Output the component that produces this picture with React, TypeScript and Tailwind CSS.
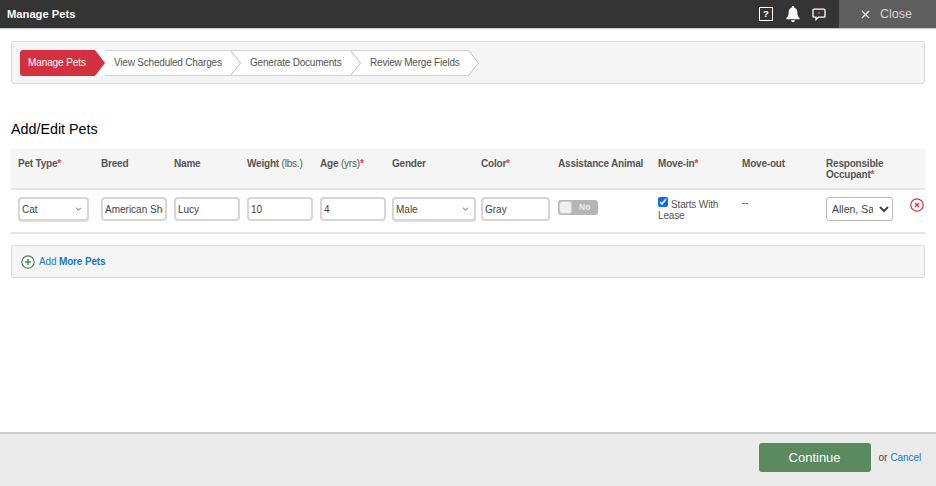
import { X } from "lucide-react";

const steps = ["View Scheduled Charges", "Generate Documents", "Review Merge Fields"];
const inputClass =
  "h-6 rounded-[4px] border-2 border-[#d6d6d6] bg-white px-[2px] text-[10px] text-[#444] outline-none";

const Req = () => <span className="text-[#e0404e]">*</span>;

const PlainSelect = ({ label, width }: { label: string; width: string }) => (
  <div className={`relative ${width}`}>
    <div className={`${inputClass} flex items-center shadow-[0_1px_1px_#ddd]`}>{label}</div>
    <svg viewBox="0 0 8 5" className="absolute right-[7px] top-[10px] h-[4px] w-[7px]" fill="none" stroke="#555" strokeWidth="1.2">
      <path d="M1 1l3 3 3-3" />
    </svg>
  </div>
);

const Chevron = ({ last }: { last: boolean }) => (
  <svg viewBox="0 0 11 26" className={`h-[26px] w-[11px] shrink-0 ${last ? "" : "bg-white"}`}>
    <path d="M0 .5h.5L10.5 13 .5 25.500H0" fill="#ffffff" stroke="#bdbdbd" />
    {!last && <path d="M0 .5h11M0 25.500h11" fill="none" stroke="#d5d5d5" />}
  </svg>
);

const Stepper = () => (
  <div className="mx-[11px] mt-[13px] flex h-[43px] items-center rounded-[3px] border border-[#d9d9d9] bg-[#f5f5f5] px-2">
    <div className="flex h-[26px] items-center rounded-l-[3px] bg-[#d3313f] pl-2 text-[10px] tracking-[-0.1px] text-white">
      <span className="w-[67px]">Manage Pets</span>
    </div>
    <svg viewBox="0 0 10 26" className="h-[26px] w-[10px] shrink-0 bg-white">
      <path d="M0 0l10 13L0 26z" fill="#d3313f" />
    </svg>
    {steps.map((step, i) => (
      <div key={step} className="flex items-center">
        <div
          className={`flex h-[26px] items-center border-y border-[#d5d5d5] bg-white pl-[9px] text-[10px] tracking-[-0.2px] text-[#555] ${
            i === 0 ? "w-[125px]" : i === 1 ? "w-[109px]" : "w-[107px]"
          }`}
        >
          {step}
        </div>
        <Chevron last={i === steps.length - 1} />
      </div>
    ))}
  </div>
);

const HeaderCell = ({ children }: { children: React.ReactNode }) => (
  <div className="text-[10px] font-bold leading-[11px] tracking-[-0.2px] text-[#555]">{children}</div>
);

export default function App() {
  return (
    <div className="flex h-[486px] w-[936px] flex-col overflow-hidden bg-white font-['Liberation_Sans',Arial,sans-serif]">
      <header className="flex h-[28px] items-center bg-[#343434] shadow-[0_1px_1px_#ccc]">
        <h1 className="pl-[7px] text-[11.2px] font-bold text-white">Manage Pets</h1>
        <div className="ml-auto flex items-center">
          <span className="flex h-[14px] w-[14px] items-center justify-center border-[1.5px] border-white text-[9.500px] font-bold leading-none text-white">
            ?
          </span>
          <svg viewBox="0 0 16 18" className="ml-[13px] h-[16px] w-[14px]" fill="#fff">
            <path d="M8 0a1.3 1.3 0 0 1 1.3 1.5C11.8 2.2 13 4.3 13 7c0 3.5.8 5 2.5 6.7V15H.5v-1.3C2.200 12 3 10.500 3 7c0-2.700 1.200-4.800 3.700-5.500A1.300 1.300 0 0 1 8 0z" />
            <path d="M5.800 16h4.400a2.200 2.200 0 0 1-4.400 0z" />
          </svg>
          <svg viewBox="0 0 14 13" className="ml-[12px] h-[13px] w-[14px]" fill="none" stroke="#fff" strokeWidth="1.300">
            <path d="M2 1.200h10a1 1 0 0 1 1 1v6a1 1 0 0 1-1 1H6.500L4 11.500V9.200H2a1 1 0 0 1-1-1v-6a1 1 0 0 1 1-1z" />
            <rect x="6" y="4" width="2" height="2" fill="#d3313f" stroke="none" />
          </svg>
          <button className="ml-[13px] flex h-[28px] w-[97px] items-center bg-[#5f5f5f] pl-[20px] text-[12.5px] text-[#d4d4d4]">
            <X size={13} strokeWidth={2} color="#fff" className="mr-[8px]" />
            Close
          </button>
        </div>
      </header>

      <Stepper />

      <h2 className="mx-[11px] mt-[36px] text-[14.3px] leading-[18px] text-black">Add/Edit Pets</h2>

      <div className="mx-[11px] mt-[11px]">
        <div className="grid h-[41px] grid-cols-[83px_73px_73px_73px_72px_89px_77px_100px_84px_84px_84px] border-b-2 border-[#e5e5e5] bg-[#f5f5f5] pl-[7px] pt-[9px]">
          <HeaderCell>Pet Type<Req /></HeaderCell>
          <HeaderCell>Breed</HeaderCell>
          <HeaderCell>Name</HeaderCell>
          <HeaderCell>Weight <span className="font-normal">(lbs.)</span></HeaderCell>
          <HeaderCell>Age <span className="font-normal">(yrs)</span><Req /></HeaderCell>
          <HeaderCell>Gender</HeaderCell>
          <HeaderCell>Color<Req /></HeaderCell>
          <HeaderCell>Assistance Animal</HeaderCell>
          <HeaderCell>Move-in<Req /></HeaderCell>
          <HeaderCell>Move-out</HeaderCell>
          <HeaderCell>Responsible Occupant<Req /></HeaderCell>
        </div>
        <div className="grid h-[44px] grid-cols-[83px_73px_73px_73px_72px_89px_77px_100px_84px_84px_84px_15px] border-b-2 border-[#e5e5e5] pl-[7px] pt-[7px]">
          <PlainSelect label="Cat" width="w-[71px]" />
          <input readOnly value="American Shorthair" className={`${inputClass} w-[66px]`} />
          <input readOnly value="Lucy" className={`${inputClass} w-[66px]`} />
          <input readOnly value="10" className={`${inputClass} w-[66px]`} />
          <input readOnly value="4" className={`${inputClass} w-[66px]`} />
          <PlainSelect label="Male" width="w-[84px]" />
          <input readOnly value="Gray" className={`${inputClass} w-[69px]`} />
          <div className="pt-[3px]">
            <div className="flex h-[15px] w-[40px] items-center rounded-[3px] bg-[#b5b5b5] pl-[1px]">
              <span className="h-[13px] w-[13px] rounded-[3px] border border-[#ccc] bg-[#efefef]" />
              <span className="ml-[7px] text-[8.5px] font-bold text-[#eee]">No</span>
            </div>
          </div>
          <label className="block pt-[1px] text-[10px] leading-[11px] tracking-[-0.15px] text-[#555]">
            <input type="checkbox" readOnly checked className="mr-[3px] h-[10px] w-[10px] -translate-y-[1px] accent-[#0a6cf5]" />
            Starts With Lease
          </label>
          <div className="text-[10px] leading-[11px] text-[#555]">--</div>
          <select className="h-[24px] w-[67px] appearance-auto rounded-[3px] border border-[#bbb] bg-white pl-[1px] pr-[3px] text-[10.5px] text-[#444]">
            <option>Allen, Sarah</option>
          </select>
          <div className="pt-[1px]">
            <svg viewBox="0 0 14 14" className="h-[14px] w-[14px]" fill="none" stroke="#d3313f" strokeWidth="1.200">
              <circle cx="7" cy="7" r="6.200" />
              <path d="M5 5l4 4M9 5l-4 4" strokeWidth="1.300" />
            </svg>
          </div>
        </div>
      </div>

      <div className="mx-[11px] mt-[11px] flex h-[33px] items-center rounded-[3px] border border-[#d9d9d9] bg-[#f5f5f5] pl-[9px]">
        <svg viewBox="0 0 14 14" className="h-[14px] w-[14px]" fill="none" stroke="#4c8a57" strokeWidth="1.200">
          <circle cx="7" cy="7" r="6.200" />
          <path d="M7 4v6M4 7h6" strokeWidth="1.500" />
        </svg>
        <a className="ml-[4px] text-[10px] tracking-[-0.15px] text-[#1a78c2]">
          Add <span className="font-bold">More Pets</span>
        </a>
      </div>

      <footer className="mt-auto flex h-[54px] items-start justify-end border-t-2 border-[#cfcfcf] bg-[#ebebeb] pr-[15px] pt-[9px]">
        <button className="h-[29px] w-[112px] rounded-[3px] bg-[#5a8a5e] text-[13px] text-white">Continue</button>
        <span className="ml-[8px] text-[10px] leading-[29px] text-[#444]">or</span>
        <a className="ml-[3px] text-[10px] leading-[29px] tracking-[-0.1px] text-[#1a78c2]">Cancel</a>
      </footer>
    </div>
  );
}
